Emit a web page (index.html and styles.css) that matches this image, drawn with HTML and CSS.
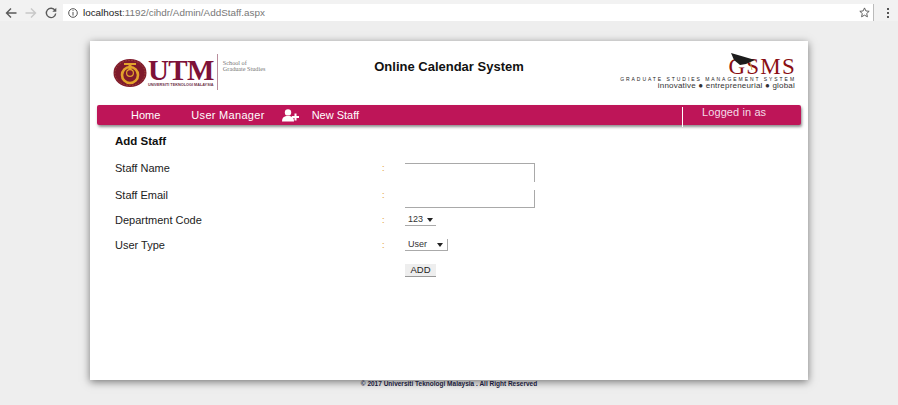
FILE: index.html
```html
<!DOCTYPE html>
<html lang="en">
<head>
    <meta charset="UTF-8">
    <meta name="viewport" content="width=device-width, initial-scale=1.0">
    <title>Add Staff</title>
    <link rel="stylesheet" href="styles.css">
</head>
<body>
    <div class="toolbar">
        <svg class="tool-icon" width="12" height="12" viewBox="0 0 12 12"><path d="M11.5 6H1.5M6 1.5 1.5 6 6 10.5" fill="none" stroke="#5a5a5a" stroke-width="1.4"/></svg>
        <svg class="tool-icon" width="12" height="12" viewBox="0 0 12 12"><path d="M.5 6h10M6 1.5 10.5 6 6 10.5" fill="none" stroke="#c8c8c8" stroke-width="1.4"/></svg>
        <svg class="tool-icon" width="12" height="12" viewBox="0 0 12 12"><path d="M10 3.4A4.7 4.7 0 1 0 10.7 6.5" fill="none" stroke="#5a5a5a" stroke-width="1.4"/><path d="M11.3 .8v4h-4z" fill="#5a5a5a"/></svg>
        <div class="address">
            <svg width="10" height="10" viewBox="0 0 10 10"><circle cx="5" cy="5" r="4.3" fill="none" stroke="#555" stroke-width="1"/><path d="M5 2.2v.9M5 4v3.6" stroke="#555" stroke-width="1"/></svg>
            <span class="url"><b>localhost</b>:1192/cihdr/Admin/AddStaff.aspx</span>
            <svg class="star" width="11" height="11" viewBox="0 0 12 12"><path d="M6 1l1.5 3.3 3.6.4-2.7 2.4.8 3.6L6 8.9 2.8 10.7l.8-3.6L.9 4.7l3.6-.4z" fill="none" stroke="#555" stroke-width="1"/></svg>
        </div>
        <div class="menu-dots"><i></i><i></i><i></i></div>
    </div>

    <div class="card">
        <div class="header">
            <div class="logo-utm">
                <svg width="34" height="30" viewBox="0 0 34 30">
                    <ellipse cx="17" cy="15" rx="16.5" ry="14" fill="#7f1a2c"/>
                    <ellipse cx="17" cy="15" rx="15" ry="12.6" fill="none" stroke="#a8563a" stroke-width="0.8" stroke-dasharray="1.5 1.5"/>
                    <circle cx="17" cy="17" r="8" fill="none" stroke="#e3a32b" stroke-width="2.6"/>
                    <circle cx="17" cy="15" r="3.4" fill="#7f1a2c" stroke="#e3a32b" stroke-width="1.2"/>
                    <rect x="11" y="5" width="12" height="2" fill="#e3a32b"/>
                    <rect x="15.5" y="6" width="3" height="6" fill="#e3a32b"/>
                </svg>
                <div class="utm-words">
                    <div class="utm-name">UTM</div>
                    <div class="utm-sub">UNIVERSITI TEKNOLOGI MALAYSIA</div>
                </div>
                <div class="utm-school">School of<br>Graduate Studies</div>
            </div>
            <div class="site-title">Online Calendar System</div>
            <div class="logo-gsms">
                <svg class="cap" width="25" height="18" viewBox="0 0 25 18">
                    <path d="M0 0 24 7 15 11 9 12 3 7z" fill="#1c1c1c"/>
                    <path d="M19 9c1 2 1 5 2 8" fill="none" stroke="#d8b04a" stroke-width="1"/>
                </svg>
                <div class="gsms-name">GSMS</div>
                <div class="gsms-full">GRADUATE STUDIES MANAGEMENT SYSTEM</div>
                <div class="gsms-tag">innovative &#9679; entrepreneurial &#9679; global</div>
            </div>
        </div>

        <div class="nav">
            <a class="nav-home">Home</a>
            <a class="nav-users">User Manager</a>
            <svg class="nav-icon" width="17" height="13" viewBox="0 0 17 13">
                <circle cx="6" cy="3.4" r="3.2" fill="#fff"/>
                <path d="M0 12.5c0-4 2-5.6 6-5.6s6 1.6 6 5.6z" fill="#fff"/>
                <path d="M13.5 4.5v7M10 8h7" stroke="#fff" stroke-width="2"/>
            </svg>
            <a class="nav-new">New Staff</a>
            <div class="nav-login">Logged in as</div>
        </div>

        <h3 class="page-title">Add Staff</h3>

        <div class="form">
            <label>Staff Name</label><span class="colon">:</span>
            <div class="field"><input class="text-input first" type="text"></div>

            <label>Staff Email</label><span class="colon">:</span>
            <div class="field"><input class="text-input second" type="text"></div>

            <label>Department Code</label><span class="colon">:</span>
            <div class="field"><span class="pick pick-code">123<i class="arrow"></i></span></div>

            <label>User Type</label><span class="colon">:</span>
            <div class="field"><span class="pick pick-type">User<i class="arrow"></i></span></div>

            <span></span><span></span>
            <div class="field"><button type="button">ADD</button></div>
        </div>
    </div>

    <div class="footer">&copy; 2017 Universiti Teknologi Malaysia . All Right Reserved</div>
</body>
</html>
```

FILE: styles.css
```css
body {
    font-family: "Liberation Sans", Arial, sans-serif;
    background-color: #eeeeee;
    margin: 0;
    height: 405px;
    overflow: hidden;
}
.toolbar {
    display: flex;
    align-items: center;
    gap: 8px;
    height: 17px;
    padding: 4px 0 0 5px;
    background-color: #f2f2f2;
}
.tool-icon {
    flex: none;
}
.address {
    display: flex;
    align-items: center;
    flex: 1;
    height: 17px;
    margin-left: -2px;
    padding: 0 3px 0 5px;
    background-color: white;
    border-right: 1px solid #bbb;
}
.url {
    margin-left: 5px;
    font-size: 9.9px;
    color: #777;
}
.url b {
    font-weight: normal;
    color: #222;
}
.star {
    margin-left: auto;
}
.menu-dots {
    display: flex;
    flex-direction: column;
    gap: 2px;
    width: 2px;
    margin: 0 9px 0 5px;
}
.menu-dots i {
    width: 2px;
    height: 2px;
    background-color: #555;
}
.card {
    width: 704px;
    height: 339px;
    margin: 20px auto 0;
    padding: 0 7px;
    background-color: white;
    box-shadow: 0 2px 8px rgba(0, 0, 0, 0.5);
}
.header {
    display: grid;
    grid-template-columns: 1fr auto 1fr;
    height: 64px;
}
.logo-utm {
    display: flex;
    align-items: flex-start;
    padding: 13px 0 0 16px;
}
.logo-utm svg {
    margin-top: 4px;
}
.utm-words {
    margin-left: 1px;
}
.utm-name {
    margin-top: 3px;
    font-family: "Liberation Serif", serif;
    font-weight: bold;
    font-size: 29px;
    line-height: 26px;
    letter-spacing: -0.6px;
    color: #7d1238;
}
.utm-sub {
    font-size: 3.8px;
    font-weight: bold;
    line-height: 4px;
    white-space: nowrap;
    color: #6d3348;
}
.utm-school {
    align-self: stretch;
    height: 30px;
    margin-left: 3px;
    padding: 6px 0 0 5px;
    border-left: 1px solid #b98d9c;
    font-family: "Liberation Serif", serif;
    font-size: 6.2px;
    line-height: 6px;
    white-space: nowrap;
    color: #777;
}
.site-title {
    padding-top: 18px;
    font-size: 13px;
    font-weight: bold;
    line-height: 15px;
    color: #111;
}
.logo-gsms {
    position: relative;
    display: flex;
    flex-direction: column;
    align-items: flex-end;
    padding: 16px 6px 0 0;
    white-space: nowrap;
}
.cap {
    position: absolute;
    top: 12px;
    right: 45px;
}
.gsms-name {
    margin-right: -1px;
    font-family: "Liberation Serif", serif;
    font-size: 23px;
    line-height: 19px;
    letter-spacing: 1.2px;
    color: #8a0f14;
}
.gsms-full {
    margin-right: -1px;
    font-size: 5px;
    line-height: 6px;
    letter-spacing: 1.95px;
    color: #222;
}
.gsms-tag {
    font-size: 8px;
    line-height: 8px;
    letter-spacing: 0.2px;
    color: #333;
}
.nav {
    display: flex;
    align-items: center;
    height: 20px;
    background-color: #be1558;
    border-radius: 2px;
    box-shadow: 1px 2px 3px rgba(0, 0, 0, 0.45);
    color: white;
    font-size: 11px;
}
.nav-home {
    margin-left: 34px;
}
.nav-users {
    margin-left: 31px;
    letter-spacing: 0.3px;
}
.nav-icon {
    margin-left: 17px;
}
.nav-new {
    margin-left: 13px;
}
.nav-login {
    align-self: stretch;
    height: 20px;
    width: 119px;
    margin: 2px 0 0 auto;
    padding-left: 19px;
    box-sizing: border-box;
    border-left: 1px solid white;
    line-height: 10px;
    letter-spacing: 0.1px;
    color: #f4dce8;
}
.page-title {
    margin: 10px 0 0 18px;
    font-size: 11.5px;
    line-height: 13px;
    color: #111;
}
.form {
    display: grid;
    grid-template-columns: 267px 23px 1fr;
    grid-template-rows: 27px 25px 25px 25px 13px;
    align-items: start;
    margin: 14px 0 0 18px;
    font-size: 11px;
    line-height: 13px;
    color: #222;
}
.colon {
    font-size: 9px;
    color: #e09a2e;
}
.field {
    display: flex;
}
.text-input {
    box-sizing: border-box;
    width: 130px;
    height: 19px;
    margin-top: 1px;
    padding: 0;
    border: 0 solid #a9a9a9;
    border-right-width: 1px;
    background-color: white;
}
.first {
    border-top-width: 1px;
}
.second {
    height: 18px;
    border-bottom-width: 1px;
}
.pick {
    display: flex;
    align-items: center;
    box-sizing: border-box;
    height: 12px;
    border-bottom: 1px solid #aaa;
    font-size: 9px;
    color: #333;
}
.pick-code {
    width: 31px;
    padding-left: 3px;
    gap: 4px;
}
.pick-type {
    justify-content: space-between;
    width: 43px;
    padding: 0 4px 0 3px;
    border-right: 1px solid #aaa;
}
.arrow {
    width: 0;
    height: 0;
    border-left: 3px solid transparent;
    border-right: 3px solid transparent;
    border-top: 4px solid #222;
}
button {
    box-sizing: border-box;
    width: 31px;
    height: 13px;
    padding: 0 0 1px;
    border: 0;
    border-bottom: 1px solid #999;
    background-color: #eeeeee;
    font-family: inherit;
    font-size: 9.5px;
    line-height: 10px;
    color: #222;
}
.footer {
    position: relative;
    font-size: 6.5px;
    font-weight: bold;
    line-height: 7px;
    text-align: center;
    color: #1a1a3a;
}
```
